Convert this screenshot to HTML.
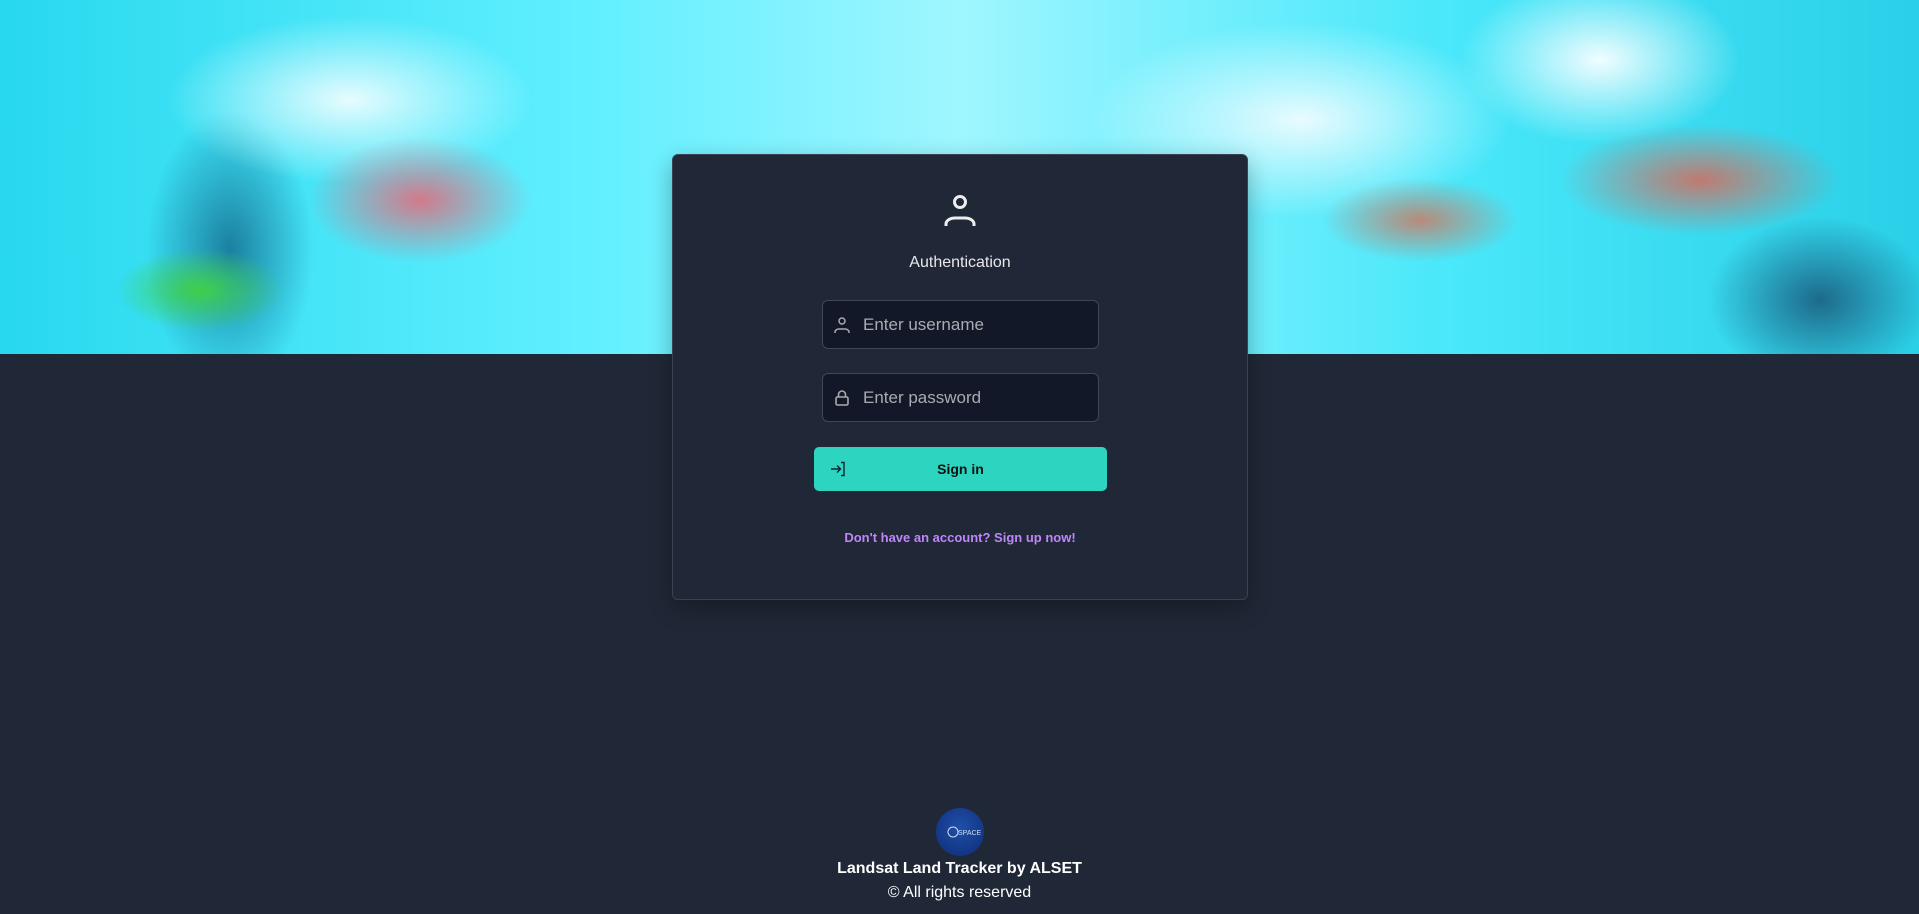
<!DOCTYPE html>
<html><head><meta charset="utf-8"><style>
*{box-sizing:border-box;margin:0;padding:0}
body{width:1919px;height:914px;overflow:hidden;background:#202837;font-family:"Liberation Sans",sans-serif;position:relative}
.banner{position:absolute;left:0;top:0;width:1919px;height:354px;
background:
radial-gradient(ellipse 120px 60px at 200px 290px,#3fcf4a 0,transparent 70%),
radial-gradient(ellipse 160px 90px at 420px 200px,#d27a8a 0,transparent 70%),
radial-gradient(ellipse 200px 80px at 1700px 180px,#c07a70 0,transparent 70%),
radial-gradient(ellipse 140px 60px at 1420px 220px,#b88a7a 0,transparent 70%),
radial-gradient(ellipse 300px 140px at 1300px 120px,#e8fbff 0,transparent 70%),
radial-gradient(ellipse 260px 120px at 350px 100px,#e6fcff 0,transparent 70%),
radial-gradient(ellipse 200px 120px at 1600px 60px,#f0fdff 0,transparent 70%),
radial-gradient(ellipse 120px 200px at 230px 250px,#1b7fa0 0,transparent 70%),
radial-gradient(ellipse 160px 120px at 1820px 300px,#1d6a8a 0,transparent 70%),
linear-gradient(90deg,#28d8ee,#5fefff 30%,#9ff6ff 50%,#4ae8fa 75%,#2ad0e8);}
.card{position:absolute;left:672px;top:154px;width:576px;height:446px;background:#202837;border:1px solid #3a4252;border-radius:6px;box-shadow:0 8px 24px rgba(0,0,0,.3)}
.title{position:absolute;left:0;right:0;top:254px;text-align:center;color:#e8e8ea;font-size:16px;left:672px;width:576px}
.inp{position:absolute;left:822px;width:277px;height:49px;background:#121827;border:1px solid #3f4656;border-radius:6px;color:#a8abb2;font-size:17px;line-height:47px;padding-left:40px}
.inp svg{position:absolute;left:10px;top:15px}
.btn{position:absolute;left:814px;top:447px;width:293px;height:44px;background:#2dd4bf;border-radius:5px;text-align:center;line-height:44px;font-weight:bold;font-size:14px;color:#111}
.btn svg{position:absolute;left:16px;top:14px}
.link{position:absolute;left:672px;width:576px;top:530px;text-align:center;color:#c084fc;font-weight:bold;font-size:13px}
.logo{position:absolute;left:936px;top:808px;width:48px;height:48px;border-radius:50%;background:radial-gradient(circle at 50% 40%,#1f4fa8,#0e2c78)}
.f1{position:absolute;left:0;width:1919px;top:860px;text-align:center;color:#fff;font-weight:bold;font-size:16px}
.f2{position:absolute;left:0;width:1919px;top:884px;text-align:center;color:#fff;font-size:16px}
</style></head><body>
<div class="banner"></div>
<div class="card"></div>
<svg style="position:absolute;left:941px;top:194px" width="38" height="34" viewBox="0 0 38 34" fill="none" stroke="#eee" stroke-width="3"><circle cx="19" cy="8" r="5.5"/><path d="M5 32v-2a9 6 0 0 1 9-6h10a9 6 0 0 1 9 6v2"/></svg>
<div class="title">Authentication</div>
<div class="inp" style="top:300px"><svg width="18" height="18" viewBox="0 0 18 18" fill="none" stroke="#aaa" stroke-width="1.5"><circle cx="9" cy="5" r="3"/><path d="M2 17v-1a4 3 0 0 1 4-3h6a4 3 0 0 1 4 3v1"/></svg>Enter username</div>
<div class="inp" style="top:373px"><svg width="18" height="18" viewBox="0 0 18 18" fill="none" stroke="#aaa" stroke-width="1.6"><rect x="3" y="8" width="12" height="8" rx="1.5"/><path d="M5.5 8V5.5a3.5 3.5 0 0 1 7 0V8"/></svg>Enter password</div>
<div class="btn"><svg width="16" height="16" viewBox="0 0 16 16" fill="none" stroke="#123" stroke-width="1.4"><path d="M1 8h9M7 4.5 10.5 8 7 11.5M11 1.5h3v13h-3"/></svg>Sign in</div>
<div class="link">Don't have an account? Sign up now!</div>
<div class="logo"><svg width="48" height="48" viewBox="0 0 48 48" fill="none" stroke="#cde" stroke-width="1"><circle cx="17" cy="24" r="5"/><text x="22" y="27" font-size="7" fill="#cde" stroke="none" font-family="Liberation Sans">SPACE</text></svg></div>
<div class="f1">Landsat Land Tracker by ALSET</div>
<div class="f2">© All rights reserved</div>
</body></html>
